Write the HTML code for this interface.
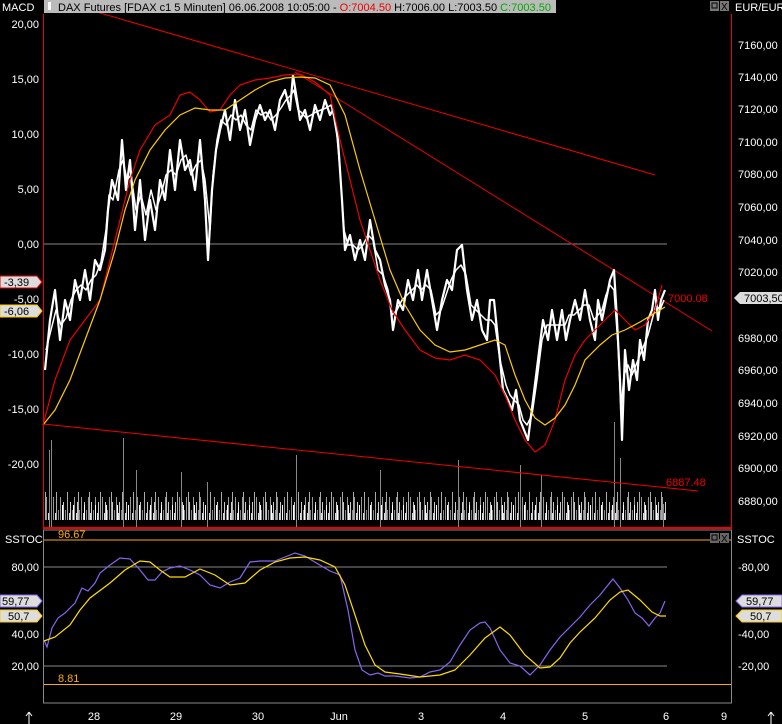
<!DOCTYPE html>
<html><head><meta charset="utf-8"><style>
html,body{margin:0;padding:0;background:#000;width:782px;height:724px;overflow:hidden;font-family:"Liberation Sans",sans-serif}
svg{position:absolute;left:0;top:0}
</style></head><body>
<svg width="782" height="724" viewBox="0 0 782 724" font-family="Liberation Sans, sans-serif" font-size="11">
<defs>
<pattern id="vol" width="7" height="40" patternUnits="userSpaceOnUse">
<rect x="0" y="22" width="1" height="18" fill="#ccc"/><rect x="2" y="30" width="1" height="10" fill="#888"/><rect x="4" y="17" width="1" height="23" fill="#999"/><rect x="6" y="33" width="1" height="7" fill="#ddd"/>
</pattern>
<pattern id="vol2" width="11" height="40" patternUnits="userSpaceOnUse">
<rect x="1" y="12" width="1" height="28" fill="#aaa"/><rect x="7" y="25" width="1" height="15" fill="#fff"/>
</pattern>
</defs>
<!-- volume -->
<rect x="45" y="487" width="622" height="40" fill="url(#vol)"/>
<rect x="45" y="487" width="622" height="40" fill="url(#vol2)"/>
<g fill="#888">
<rect x="49" y="450" width="1" height="77"/><rect x="51" y="440" width="1" height="87"/><rect x="123" y="438" width="1" height="89"/><rect x="136" y="470" width="1" height="57"/><rect x="181" y="472" width="1" height="55"/><rect x="207" y="482" width="1" height="45"/><rect x="296" y="455" width="1" height="72"/><rect x="380" y="470" width="1" height="57"/><rect x="458" y="460" width="1" height="67"/><rect x="520" y="465" width="1" height="62"/><rect x="541" y="475" width="1" height="52"/><rect x="614" y="422" width="1" height="105"/><rect x="620" y="458" width="1" height="69"/><rect x="663" y="504" width="1" height="23"/>
</g>
<line x1="43" y1="244" x2="667" y2="244" stroke="#888" stroke-width="1"/>
<g stroke="#e00" stroke-width="1" fill="none">
<line x1="90" y1="10" x2="655" y2="175"/>
<line x1="295" y1="72" x2="712" y2="331"/>
<line x1="43" y1="424" x2="698" y2="491"/>
</g>
<!-- price -->
<g fill="none" stroke="#fff" stroke-linejoin="round">
<polyline stroke-width="2.2" points="45,370 50,320 55,290 60,340 65,300 70,320 75,280 80,300 85,270 90,300 95,260 100,270 105,250 108,210 112,180 118,200 122,140 126,190 130,160 135,230 140,180 145,240 150,200 155,230 160,180 165,200 170,150 175,190 180,140 185,170 190,160 195,190 200,140 205,200 208,260 212,190 216,150 220,130 225,110 230,140 235,100 240,130 245,110 250,145 255,120 260,105 265,120 270,110 275,130 280,100 285,90 290,110 293,75 297,100 300,120 305,110 310,130 315,105 320,120 325,100 330,115 333,110 338,140 342,200 345,250 350,235 355,260 360,240 365,260 370,220 375,250 380,260 385,285 390,300 393,330 398,300 403,310 408,280 413,300 418,270 422,300 427,270 432,300 437,330 442,300 447,280 452,290 457,250 462,245 467,290 472,320 477,300 482,330 487,340 490,300 494,300 498,340 503,390 508,400 512,410 516,390 520,420 524,430 528,440 533,400 538,360 543,320 548,340 552,310 557,340 562,310 566,340 570,320 575,300 580,320 585,290 590,320 595,340 598,300 602,320 606,300 610,280 614,270 617,320 620,380 622,440 625,350 629,390 633,360 637,380 640,340 644,360 648,320 652,310 655,290 658,320 661,300 665,290"/>
<polyline stroke-width="1.5" points="46,350 51,330 56,310 61,325 66,318 71,300 76,290 81,285 86,290 91,280 96,275 101,262 106,230 109,195 113,200 119,170 123,160 127,180 131,175 136,210 141,195 146,215 151,190 156,210 161,195 166,175 171,170 176,175 181,160 186,155 191,175 196,165 201,160 205,180 210,230 213,175 217,140 221,120 226,125 231,115 236,120 241,115 246,125 251,130 256,110 261,115 266,112 271,120 276,115 281,108 286,100 291,95 294,90 298,110 301,112 306,118 311,115 316,112 321,110 326,108 331,105 336,125 340,170 344,230 348,245 353,245 358,250 363,245 368,235 373,240 378,270 383,275 388,290 392,315 397,310 402,300 407,295 412,290 417,285 421,290 426,285 431,290 436,315 441,310 446,295 451,280 456,270 461,265 466,275 471,305 476,310 481,315 486,320 491,320 495,325 500,360 506,385 510,395 514,400 519,405 523,420 527,425 532,415 537,380 542,340 547,325 551,325 556,325 561,325 565,325 569,315 574,315 579,310 584,305 589,305 594,320 598,315 602,310 606,295 610,285 614,290 618,345 621,410 624,375 628,365 632,375 636,365 640,355 644,345 648,335 652,320 656,305 660,310 664,300"/>
</g>
<polyline fill="none" stroke="#e00" stroke-width="1.2" points="43,425 55,380 70,340 85,320 100,300 110,260 120,220 130,180 140,150 155,125 170,115 180,95 190,92 200,100 210,112 220,110 230,95 240,85 255,80 270,78 285,75 300,74 315,82 330,95 340,140 350,180 360,220 370,250 380,280 392,310 405,330 420,350 435,358 450,360 465,355 480,360 495,375 505,395 515,420 525,440 535,452 545,445 555,420 565,380 575,355 585,340 595,330 605,320 615,310 625,320 635,330 645,325 655,310 662,285"/>
<polyline fill="none" stroke="#fc0" stroke-width="1.2" points="43,425 55,410 70,380 85,340 100,300 115,250 125,210 135,180 150,150 165,130 180,115 195,108 210,110 225,110 240,100 255,90 270,82 285,78 300,77 315,78 330,85 345,115 360,170 375,220 390,270 405,305 420,330 435,345 450,352 465,350 480,345 495,340 505,345 515,375 525,400 535,418 545,425 555,418 565,405 575,385 585,360 600,345 612,335 625,330 640,322 655,313 665,307"/>
<text x="668" y="302" fill="#e00">7000.08</text>
<text x="666" y="486" fill="#e00">6887.48</text>
<line x1="43.5" y1="14" x2="43.5" y2="528" stroke="#e00"/>
<line x1="731.5" y1="14" x2="731.5" y2="528" stroke="#e00"/>
<line x1="43" y1="528" x2="732" y2="528" stroke="#e00" stroke-width="2"/>
<!-- header -->
<rect x="44" y="0" width="512" height="13" fill="#bbb"/>
<rect x="48" y="2" width="3" height="8" fill="#fff"/>
<text x="2" y="11" fill="#fff">MACD</text>
<text x="58" y="11" fill="#000" font-size="11" textLength="493" lengthAdjust="spacingAndGlyphs">DAX Futures [FDAX c1  5 Minuten] 06.06.2008 10:05:00 - <tspan fill="#e00">O:7004.50</tspan> H:7006.00 L:7003.50 <tspan fill="#0a0">C:7003.50</tspan></text>
<rect x="710" y="1" width="9" height="10" fill="#777"/><rect x="720" y="1" width="9" height="10" fill="#777"/>
<rect x="712" y="3" width="5" height="5" fill="none" stroke="#000"/>
<text x="721" y="10" fill="#000" font-size="10">X</text>
<text x="735" y="11" fill="#fff">EUR/EUR</text>
<g fill="#fff" text-anchor="end">
<text x="39" y="28">20,00</text><text x="39" y="83">15,00</text><text x="39" y="138">10,00</text><text x="39" y="193">5,00</text><text x="39" y="248">0,00</text><text x="39" y="303">-5,00</text><text x="39" y="358">-10,00</text><text x="39" y="413">-15,00</text><text x="39" y="468">-20,00</text>
</g>
<g fill="#fff">
<text x="738" y="49">7160,00</text><text x="738" y="81">7140,00</text><text x="738" y="113">7120,00</text><text x="738" y="146">7100,00</text><text x="738" y="178">7080,00</text><text x="738" y="211">7060,00</text><text x="738" y="244">7040,00</text><text x="738" y="276">7020,00</text><text x="738" y="342">6980,00</text><text x="738" y="374">6960,00</text><text x="738" y="407">6940,00</text><text x="738" y="440">6920,00</text><text x="738" y="472">6900,00</text><text x="738" y="505">6880,00</text>
</g>
<path d="M0,276 H37 L42,282 L37,288 H0Z" fill="#ddd" stroke="#e00"/>
<text x="4" y="286" fill="#000">-3,39</text>
<path d="M0,305 H37 L42,311 L37,317 H0Z" fill="#ddd" stroke="#fc0"/>
<text x="4" y="315" fill="#000">-6,06</text>
<path d="M740,292 H782 V304 H740 L734,298Z" fill="#ddd"/>
<text x="744" y="302" fill="#000">7003,50</text>
<!-- lower panel -->
<line x1="43" y1="567" x2="667" y2="567" stroke="#888"/>
<line x1="43" y1="666" x2="667" y2="666" stroke="#888"/>
<line x1="43" y1="540" x2="732" y2="540" stroke="#fa0"/>
<line x1="43" y1="684.5" x2="732" y2="684.5" stroke="#fa0"/>
<text x="58" y="538" fill="#fa0">96.67</text>
<text x="58" y="682" fill="#fa0">8.81</text>
<polyline fill="none" stroke="#86e" stroke-width="1.2" points="44,640 47,647 52,628 58,618 65,613 75,603 82,588 88,591 95,583 100,573 110,565 120,558 130,559 140,570 148,580 155,580 162,572 170,568 180,566 190,570 200,575 210,585 220,588 230,582 240,578 250,562 260,561 275,561 285,557 295,553 305,556 318,564 330,571 340,575 348,610 355,650 362,670 370,675 378,673 385,676 395,676 410,678 420,677 430,672 440,670 450,662 460,645 470,630 480,623 485,622 490,628 500,650 510,663 520,666 530,675 540,665 550,650 560,637 570,627 580,617 590,605 600,595 608,585 613,579 620,588 628,600 635,613 642,618 649,626 655,618 660,613 665,601"/>
<polyline fill="none" stroke="#fd0" stroke-width="1.2" points="44,641 55,637 70,625 80,610 90,598 110,583 125,570 140,561 150,562 160,570 170,577 185,577 200,569 215,575 230,585 245,583 260,570 275,562 290,558 305,557 320,560 335,567 345,585 355,615 365,645 375,665 385,672 400,674 420,677 440,675 455,670 470,655 485,638 500,627 510,635 525,655 540,668 550,667 560,658 570,643 580,632 595,618 610,600 620,592 628,590 640,600 652,612 660,616 666,616"/>
<rect x="43.5" y="530" width="688" height="173" fill="none" stroke="#888"/>
<rect x="710" y="533" width="9" height="10" fill="#666"/><rect x="720" y="533" width="9" height="10" fill="#666"/>
<rect x="712" y="535" width="5" height="5" fill="none" stroke="#000"/>
<text x="721" y="542" fill="#000" font-size="10">X</text>
<text x="5" y="543" fill="#fff">SSTOC</text>
<text x="737" y="543" fill="#fff">SSTOC</text>
<g fill="#fff">
<text x="39" y="571" text-anchor="end">80,00</text><text x="39" y="638" text-anchor="end">40,00</text><text x="39" y="670" text-anchor="end">20,00</text>
<text x="738" y="571">-80,00</text><text x="738" y="638">-40,00</text><text x="738" y="670">-20,00</text>
</g>
<path d="M0,595 H37 L42,601 L37,607 H0Z" fill="#ddd" stroke="#86e"/>
<text x="2" y="605" fill="#000">59,77</text>
<path d="M0,610 H37 L42,616 L37,622 H0Z" fill="#ddd" stroke="#fc0"/>
<text x="8" y="620" fill="#000">50,7</text>
<path d="M742,595 H782 V607 H742 L736,601Z" fill="#ddd" stroke="#86e"/>
<text x="746" y="605" fill="#000">59,77</text>
<path d="M742,610 H782 V622 H742 L736,616Z" fill="#ddd" stroke="#fc0"/>
<text x="750" y="620" fill="#000">50,7</text>
<g fill="#fff" text-anchor="middle">
<text x="94" y="720">28</text><text x="176" y="720">29</text><text x="258" y="720">30</text><text x="339" y="720">Jun</text><text x="421" y="720">3</text><text x="503" y="720">4</text><text x="585" y="720">5</text><text x="666" y="720">6</text><text x="724" y="720">9</text>
</g>
<g stroke="#fff">
<line x1="29" y1="712" x2="29" y2="724"/><line x1="26" y1="716" x2="29" y2="712"/><line x1="32" y1="716" x2="29" y2="712"/>
<line x1="771" y1="712" x2="771" y2="724"/><line x1="768" y1="716" x2="771" y2="712"/><line x1="774" y1="716" x2="771" y2="712"/>
</g>
</svg>
</body></html>
